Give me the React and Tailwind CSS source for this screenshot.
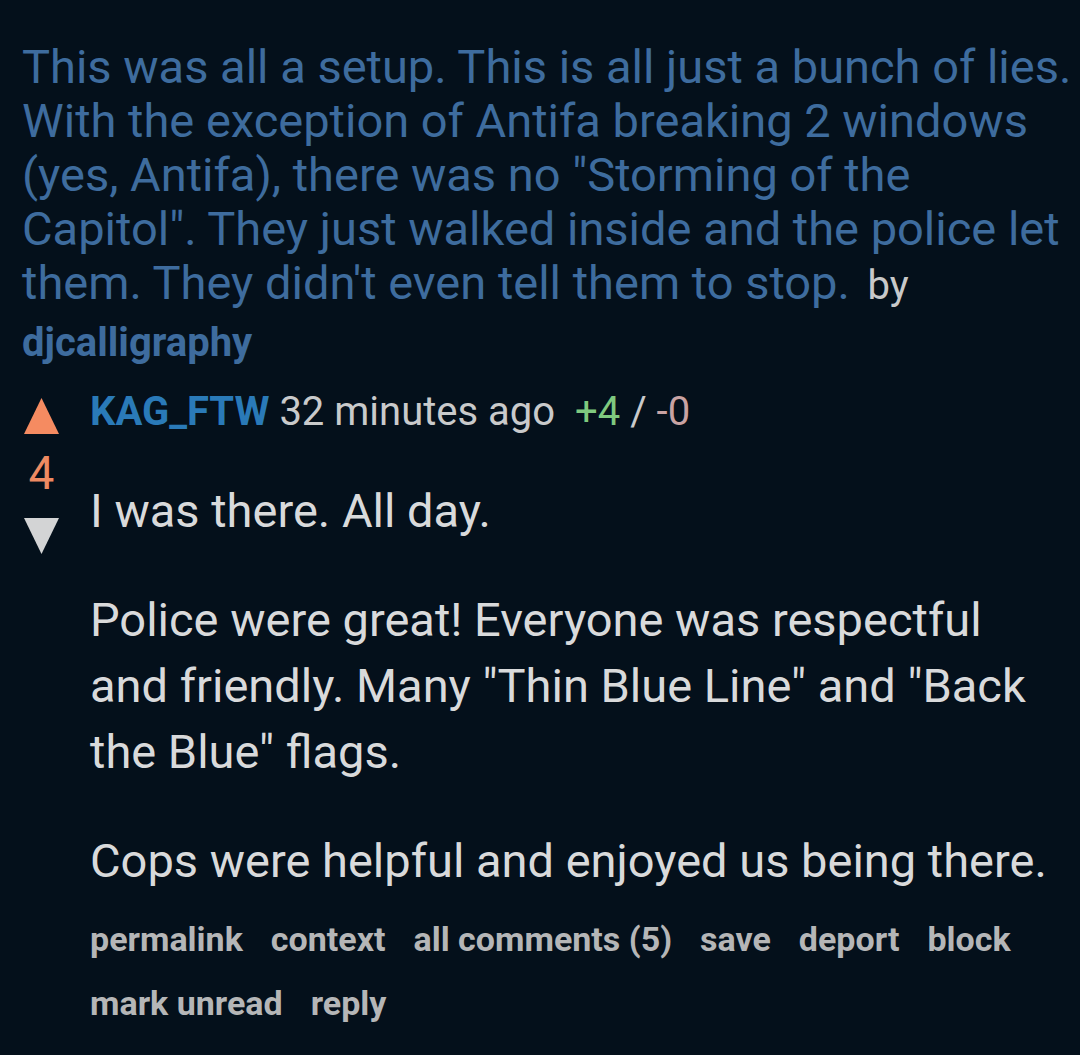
import React from "react";

const actions = ["permalink", "context", "all comments (5)", "save", "deport", "block", "mark unread", "reply"];

const Arrow = ({ up, color }) => (
  <svg width="35" height="36" viewBox="0 0 35 36" className="block">
    <polygon points={up ? "17.5,0 35,36 0,36" : "0,0 35,0 17.5,36"} fill={color} />
  </svg>
);

const App = () => {
  return (
    <div className="w-[1080px] h-[1055px] overflow-hidden bg-[#04101b] font-['Roboto',sans-serif]">
      <div className="pt-[40px] pl-[22px] pr-[4px] text-[47px] leading-[54px] text-[#3e6c9e]">
        This was all a setup. This is all just a bunch of lies.
        <br />
        With the exception of Antifa breaking 2 windows
        <br />
        (yes, Antifa), there was no "Storming of the
        <br />
        Capitol". They just walked inside and the police let
        <br />
        them. They didn't even tell them to stop.{" "}
        <span className="ml-[6px] text-[40px] text-[#c8c9ca]">by</span>
        <br />
        <span className="text-[40px] font-bold text-[#3e6c9e]">djcalligraphy</span>
      </div>

      <div className="mt-[18px] flex">
        <div className="w-[90px] shrink-0 flex flex-col pl-[24px]">
          <div className="mt-[10px]">
            <Arrow up color="#f58b61" />
          </div>
          <div className="mt-[16px] w-[35px] text-center text-[46px] leading-[46px] text-[#ee8a62]">4</div>
          <div className="mt-[22px]">
            <Arrow color="#d3d4d5" />
          </div>
        </div>

        <div className="flex-1 pr-[20px]">
          <div className="text-[40px] leading-[48px] whitespace-nowrap">
            <span className="font-bold text-[#2a7ab8]">KAG_FTW</span>
            <span className="text-[#c9cacb]"> 32 minutes ago </span>
            <span className="ml-[10px] text-[#7fc97f]">+4</span>
            <span className="text-[#c9cacb]"> / </span>
            <span className="text-[#c9a3a3]">-0</span>
          </div>

          <div className="mt-[42px] flex flex-col gap-[43px] text-[47px] leading-[66px] text-[#d9dadb]">
            <p>I was there. All day.</p>
            <p>
              Police were great! Everyone was respectful
              <br />
              and friendly. Many "Thin Blue Line" and "Back
              <br />
              the Blue" flags.
            </p>
            <p>Cops were helpful and enjoyed us being there.</p>
          </div>

          <div className="mt-[13px] flex flex-wrap gap-x-[28px] text-[34px] leading-[64px] font-bold text-[#b5b6b7]">
            {actions.map((a) => (
              <span key={a} className="whitespace-nowrap">
                {a}
              </span>
            ))}
          </div>
        </div>
      </div>
    </div>
  );
};

export default App;
